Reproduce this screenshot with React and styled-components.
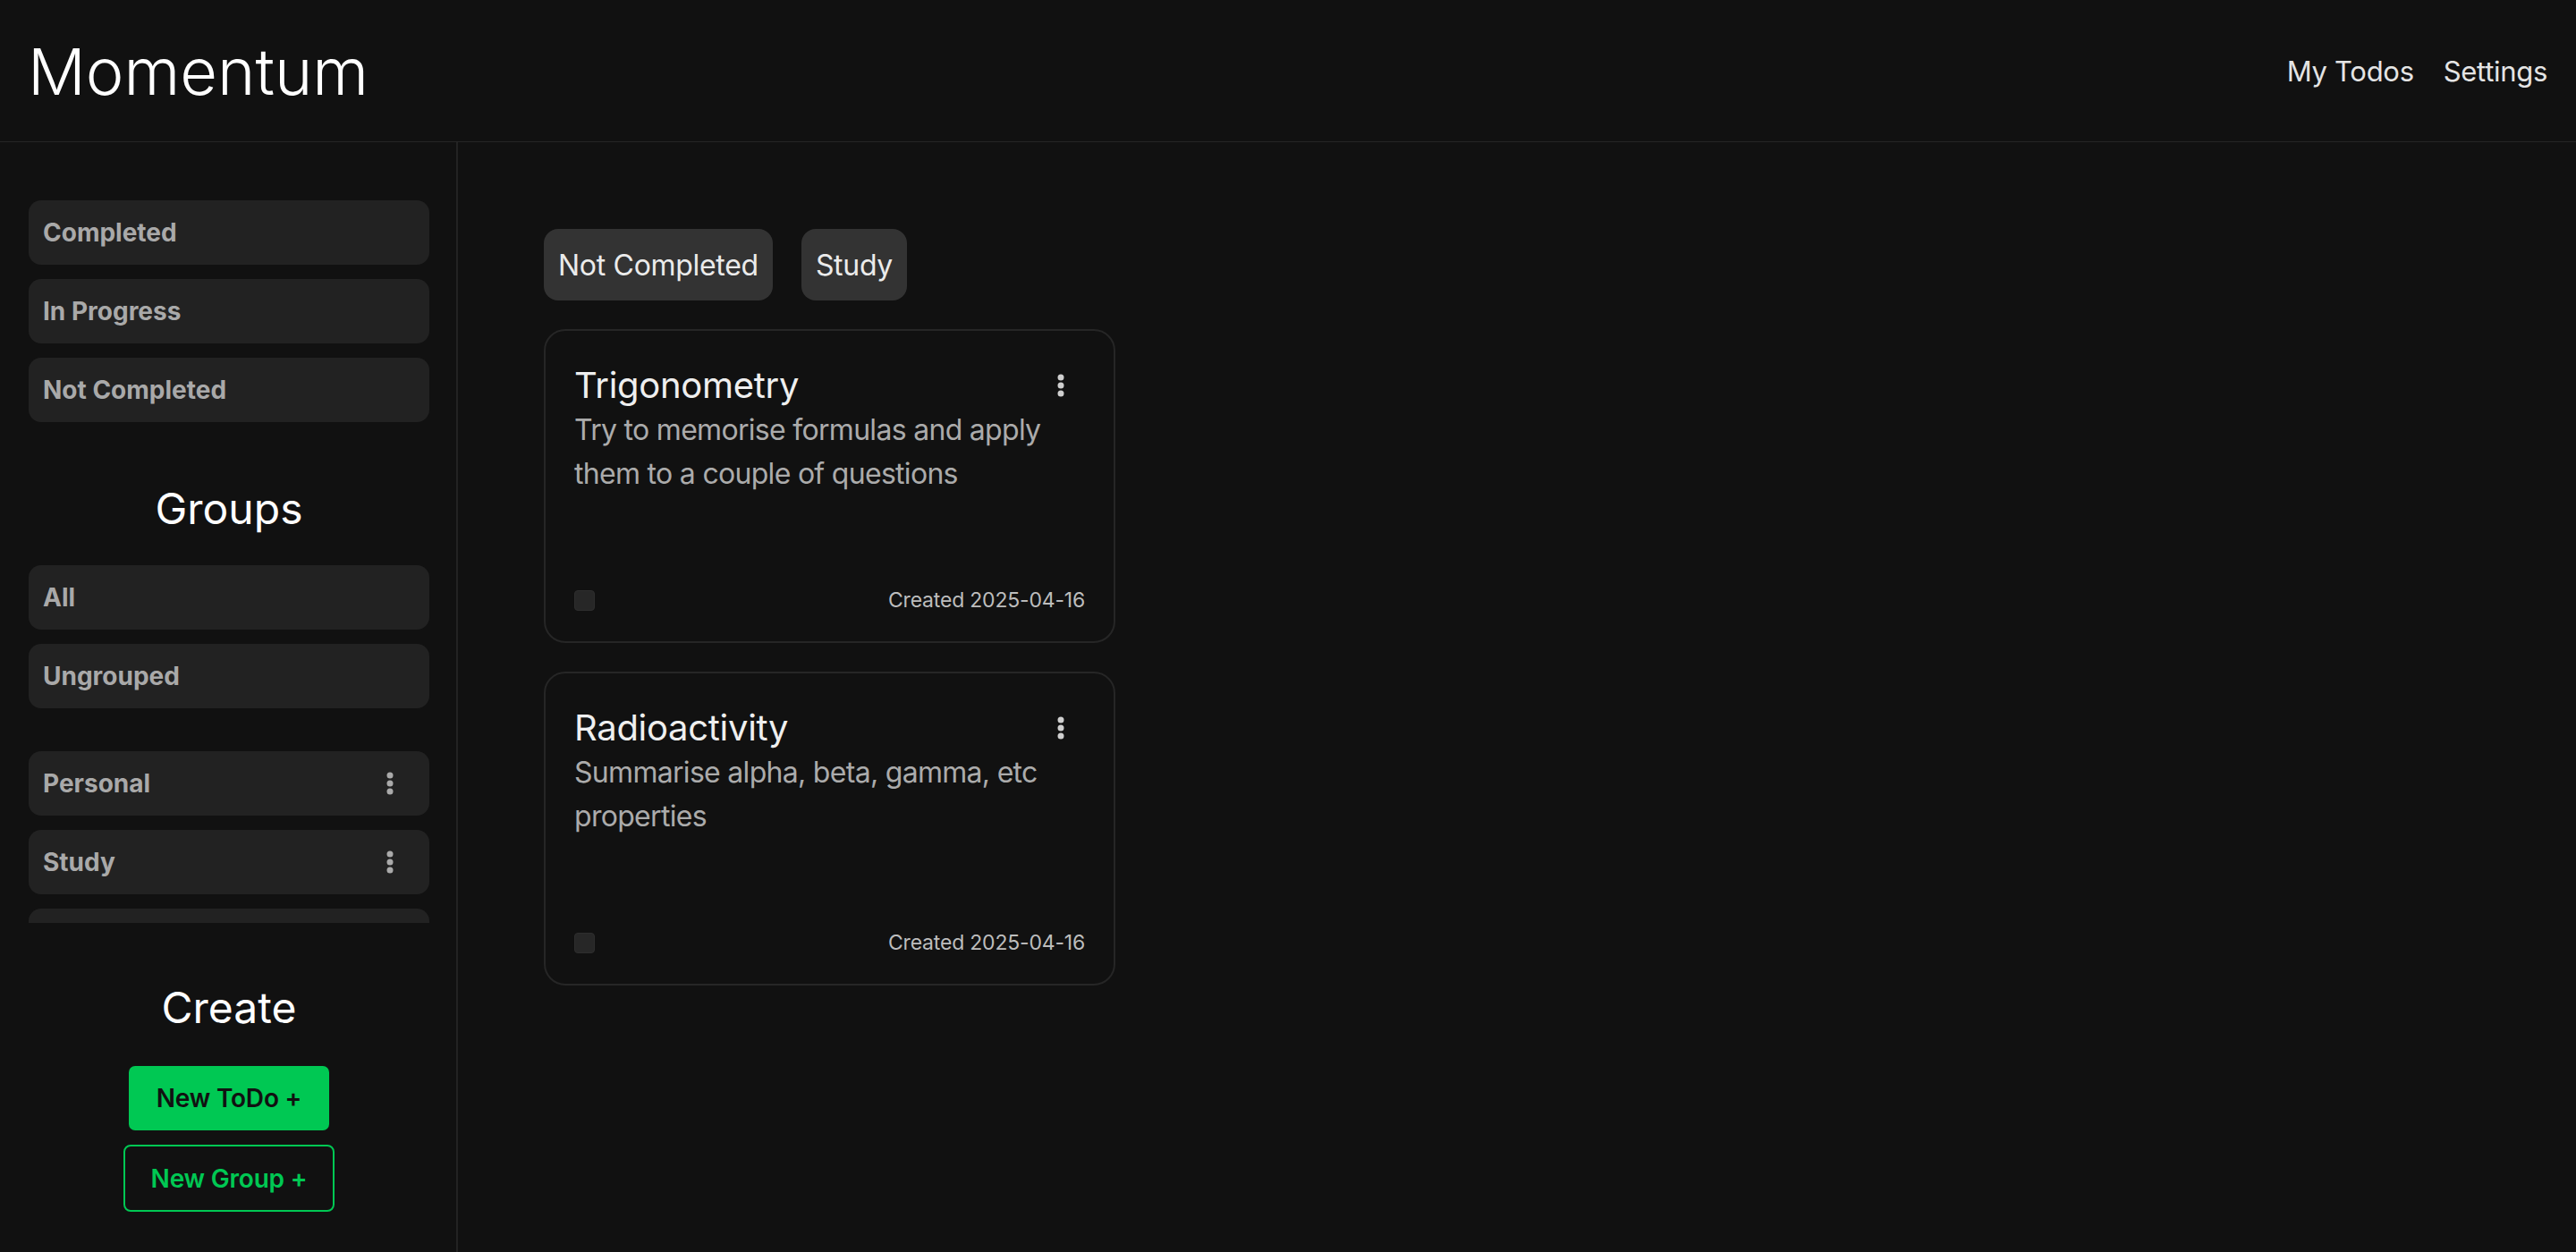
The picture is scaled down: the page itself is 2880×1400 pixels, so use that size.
import React from 'react';
import styled, { createGlobalStyle } from 'styled-components';

const GlobalStyle = createGlobalStyle`
  * { box-sizing: border-box; }
  html, body {
    margin: 0;
    padding: 0;
    background: #111111;
    color: #ececec;
    font-family: 'Inter', 'Noto Sans', sans-serif;
  }
`;

const Page = styled.div`
  display: flex;
  flex-direction: column;
  height: 100vh;
  background: #111111;
`;

const Header = styled.header`
  height: 159px;
  flex-shrink: 0;
  display: flex;
  align-items: center;
  justify-content: space-between;
  padding: 0 32px 0 31px;
  border-bottom: 1px solid #262626;
`;

const Logo = styled.h1`
  margin: 0;
  font-size: 72px;
  font-weight: 300;
  color: #ffffff;
`;

const Nav = styled.nav`
  display: flex;
  gap: 33px;
`;

const NavLink = styled.a`
  font-size: 31px;
  font-weight: 400;
  letter-spacing: -0.3px;
  color: #e4e4e4;
  text-decoration: none;
  cursor: pointer;
`;

const Body = styled.div`
  flex: 1;
  min-height: 0;
  display: flex;
`;

const Sidebar = styled.aside`
  width: 512px;
  flex-shrink: 0;
  display: flex;
  flex-direction: column;
  padding: 65px 30px 45px 32px;
  border-right: 2px solid #232323;
`;

const ItemList = styled.div`
  display: flex;
  flex-direction: column;
  gap: 16px;
  flex-shrink: 0;
`;

const ScrollList = styled(ItemList)`
  flex: 1;
  min-height: 0;
  margin-top: 48px;
  overflow-y: auto;
  scrollbar-width: none;
  &::-webkit-scrollbar { display: none; }
`;

const SideItem = styled.div`
  height: 72px;
  flex-shrink: 0;
  display: flex;
  align-items: center;
  justify-content: space-between;
  padding: 0 40px 0 16px;
  border-radius: 14px;
  background: #222222;
  color: #a9a9a9;
  font-size: 28px;
  font-weight: 700;
  cursor: pointer;
`;

const SectionTitle = styled.h2`
  margin: ${p => p.$margin};
  font-size: 48px;
  line-height: 58px;
  font-weight: 400;
  text-align: center;
  color: #ffffff;
  flex-shrink: 0;
`;

const CreateBox = styled.div`
  display: flex;
  flex-direction: column;
  align-items: center;
  gap: 16px;
  flex-shrink: 0;
`;

const PrimaryButton = styled.button`
  height: 72px;
  padding: 0 31px;
  border: none;
  border-radius: 7px;
  background: #00c853;
  color: #111111;
  font-family: inherit;
  font-size: 28px;
  font-weight: 600;
  letter-spacing: -0.2px;
  cursor: pointer;
`;

const OutlineButton = styled(PrimaryButton)`
  height: 75px;
  padding: 0 29px;
  border: 2px solid #00c853;
  border-radius: 8px;
  background: transparent;
  color: #00c853;
`;

const Main = styled.main`
  flex: 1;
  padding: 97px 96px;
  display: flex;
  flex-direction: column;
  gap: 32px;
  overflow-y: auto;
`;

const TagRow = styled.div`
  display: flex;
  gap: 32px;
`;

const Tag = styled.span`
  height: 80px;
  display: inline-flex;
  align-items: center;
  padding: 0 16px;
  border-radius: 16px;
  background: #333333;
  color: #ebebeb;
  font-size: 32px;
  font-weight: 400;
  letter-spacing: -0.3px;
`;

const Card = styled.article`
  width: 639px;
  height: 351px;
  display: flex;
  flex-direction: column;
  padding: 32px;
  border: 2px solid #262626;
  border-radius: 24px;
  background: #111111;
`;

const CardHead = styled.div`
  display: flex;
  align-items: center;
  justify-content: space-between;
`;

const CardTitle = styled.h3`
  margin: 0;
  font-size: 40px;
  line-height: 58px;
  font-weight: 400;
  letter-spacing: -0.3px;
  color: #efefef;
`;

const CardText = styled.p`
  margin: -4px 0 0;
  flex: 1;
  font-size: 32px;
  line-height: 49px;
  letter-spacing: -0.7px;
  color: #ababab;
`;

const CardFoot = styled.div`
  display: flex;
  align-items: center;
  justify-content: space-between;
`;

const Check = styled.input.attrs({ type: 'checkbox' })`
  appearance: none;
  margin: 0;
  width: 23px;
  height: 23px;
  border: 1px solid #2e2e2e;
  border-radius: 4px;
  background: #272727;
`;

const Created = styled.span`
  font-size: 23px;
  letter-spacing: -0.2px;
  color: #bdbdbd;
`;

const DotsButton = styled.button`
  display: flex;
  align-items: center;
  justify-content: center;
  padding: 0;
  margin-right: ${p => p.$offset || 0}px;
  border: none;
  background: none;
  color: ${p => p.$color || '#aaaaaa'};
  cursor: pointer;
`;

const Dots = ({ color, offset }) => (
  <DotsButton $color={color} $offset={offset}>
    <svg width="8" height="26" viewBox="0 0 8 26" fill="currentColor">
      <circle cx="4" cy="4" r="3.5" />
      <circle cx="4" cy="13" r="3.5" />
      <circle cx="4" cy="22" r="3.5" />
    </svg>
  </DotsButton>
);

const todos = [
  {
    title: 'Trigonometry',
    text: 'Try to memorise formulas and apply them to a couple of questions',
    created: '2025-04-16',
  },
  {
    title: 'Radioactivity',
    text: 'Summarise alpha, beta, gamma, etc properties',
    created: '2025-04-16',
  },
];

const groups = ['Personal', 'Study', ''];

const App = () => (
  <>
    <GlobalStyle />
    <Page>
      <Header>
        <Logo>Momentum</Logo>
        <Nav>
          <NavLink>My Todos</NavLink>
          <NavLink>Settings</NavLink>
        </Nav>
      </Header>
      <Body>
        <Sidebar>
          <ItemList>
            <SideItem>Completed</SideItem>
            <SideItem>In Progress</SideItem>
            <SideItem>Not Completed</SideItem>
          </ItemList>
          <SectionTitle $margin="68px 0 34px">Groups</SectionTitle>
          <ItemList>
            <SideItem>All</SideItem>
            <SideItem>Ungrouped</SideItem>
          </ItemList>
          <ScrollList>
            {groups.map((name, i) => (
              <SideItem key={i}>
                {name}
                {name && <Dots />}
              </SideItem>
            ))}
          </ScrollList>
          <SectionTitle $margin="66px 0 36px">Create</SectionTitle>
          <CreateBox>
            <PrimaryButton>New ToDo +</PrimaryButton>
            <OutlineButton>New Group +</OutlineButton>
          </CreateBox>
        </Sidebar>
        <Main>
          <TagRow>
            <Tag>Not Completed</Tag>
            <Tag>Study</Tag>
          </TagRow>
          {todos.map(todo => (
            <Card key={todo.title}>
              <CardHead>
                <CardTitle>{todo.title}</CardTitle>
                <Dots color="#cfcfcf" offset={23} />
              </CardHead>
              <CardText>{todo.text}</CardText>
              <CardFoot>
                <Check />
                <Created>Created {todo.created}</Created>
              </CardFoot>
            </Card>
          ))}
        </Main>
      </Body>
    </Page>
  </>
);

export default App;
